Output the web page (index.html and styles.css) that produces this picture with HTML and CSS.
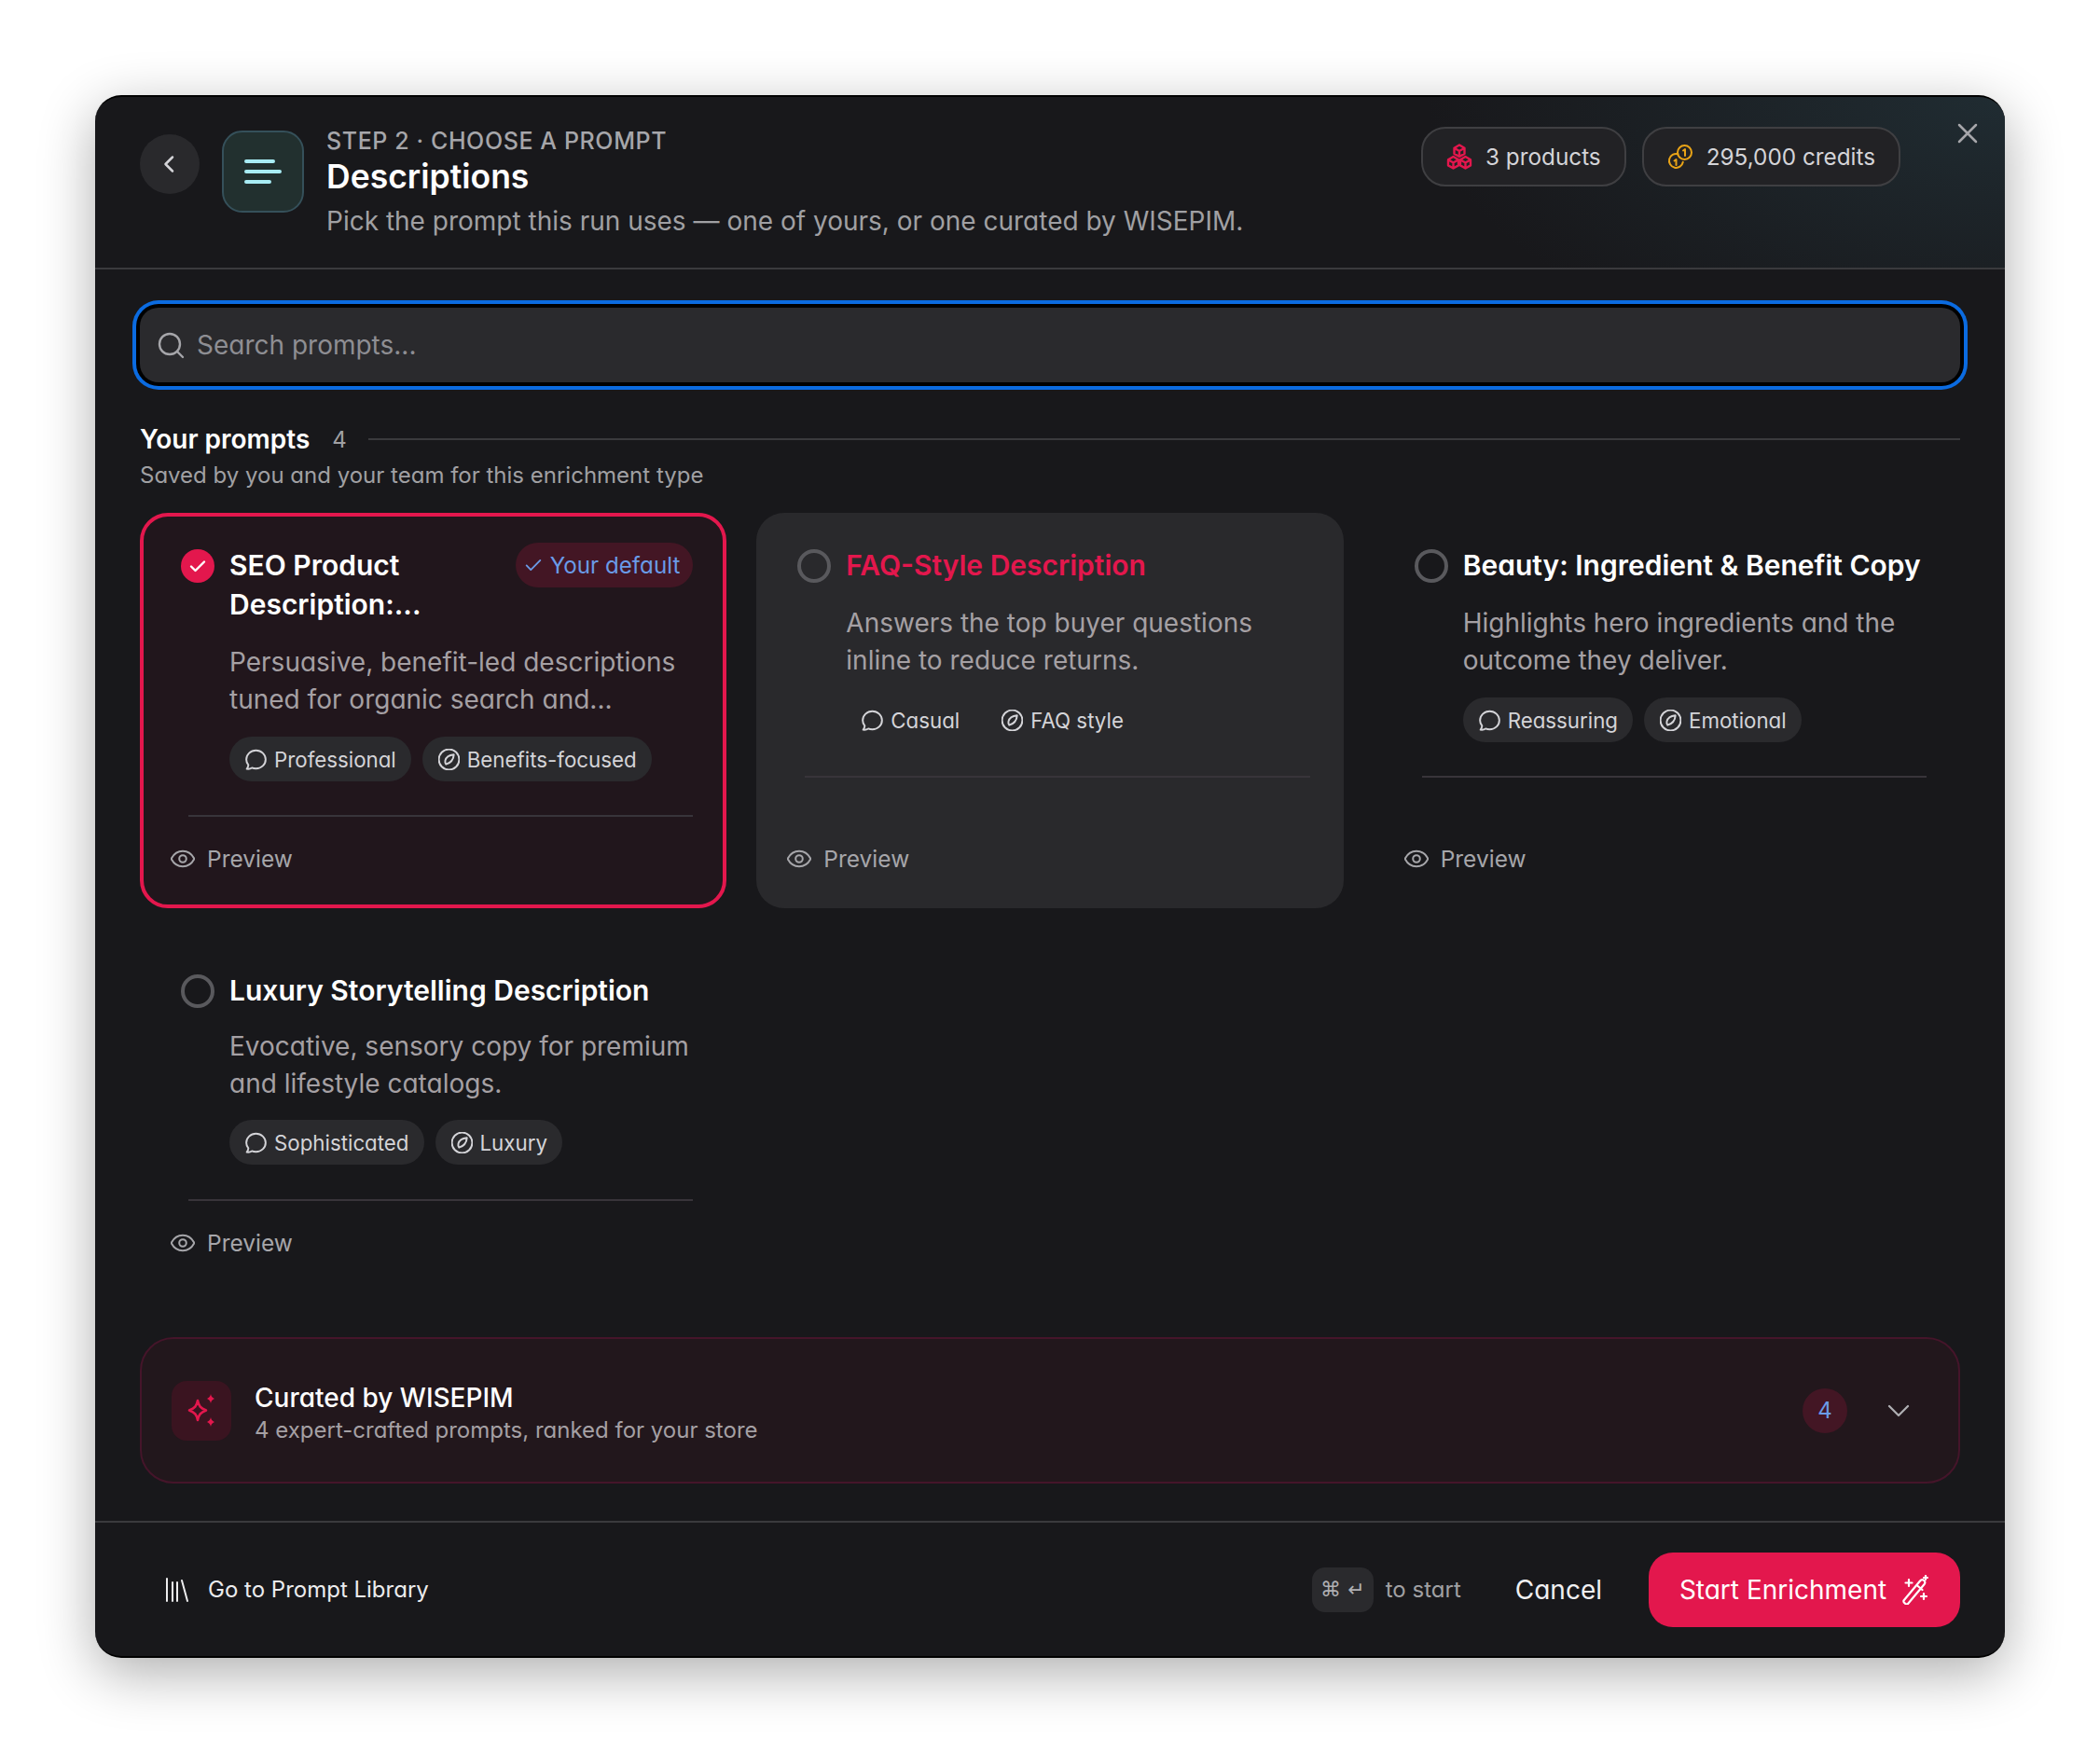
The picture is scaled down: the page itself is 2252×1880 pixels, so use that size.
FILE: index.html
```html
<!DOCTYPE html>
<html lang="en">
<head>
    <meta charset="UTF-8">
    <title>Choose a prompt</title>
    <link rel="stylesheet" href="styles.css">
</head>
<body>
    <svg class="defs" width="0" height="0">
        <symbol id="i-chat" viewBox="2 2 20 20"><path d="M3.500 20.800c1.800.3 3.400-.1 4.700-1 1.100.5 2.400.7 3.800.7 5 0 9-3.800 9-8.500S17 3.500 12 3.500 3 7.300 3 12c0 2 .7 3.800 1.900 5.200-.1 1.300-.6 2.500-1.400 3.600z"/></symbol>
        <symbol id="i-compass" viewBox="2 2 20 20"><circle cx="12" cy="12" r="9.500"/><path d="M16.500 7.500c-.3 4.500-2.500 7.500-7.300 9-.8-1-1-2.200-.7-3.500.7-2.900 4-5 8-5.500z"/></symbol>
        <symbol id="i-eye" viewBox="1 1 22 22"><path d="M1.500 12C3.800 7.500 7.500 5 12 5s8.200 2.500 10.500 7c-2.300 4.500-6 7-10.500 7S3.800 16.500 1.500 12z"/><circle cx="12" cy="12" r="3.200"/></symbol>
    </svg>

    <div class="modal">
        <div class="header">
            <button class="back-btn">
                <svg width="24" height="24" viewBox="0 0 24 24"><path d="M15 4.500 7.500 12l7.500 7.500"/></svg>
            </button>
            <div class="type-icon">
                <svg width="40" height="30" viewBox="0 0 40 30"><path d="M2 4h29M2 15h36M2 26h25"/></svg>
            </div>
            <div class="header-text">
                <div class="eyebrow">STEP 2 · CHOOSE A PROMPT</div>
                <h1>Descriptions</h1>
                <p>Pick the prompt this run uses — one of yours, or one curated by WISEPIM.</p>
            </div>
            <div class="header-chips">
                <div class="chip">
                    <svg class="chip-cubes" width="28" height="28" viewBox="0 0 28 28">
                        <path d="M14 1.500l5.500 3.200v6.200L14 14l-5.500-3.100V4.700zM14 8v6M8.500 4.700 14 8l5.500-3.300"/>
                        <path d="M7.500 14l5.500 3.200v6.200l-5.500 3.100L2 23.400v-6.200zM7.500 20.500v6M2 17.200l5.500 3.300 5.500-3.300"/>
                        <path d="M20.500 14l5.500 3.200v6.200l-5.500 3.100-5.500-3.100v-6.200zM20.500 20.500v6M15 17.200l5.500 3.300 5.500-3.300"/>
                    </svg>
                    3 products
                </div>
                <div class="chip">
                    <svg class="chip-coins" width="28" height="28" viewBox="0 0 28 28">
                        <circle cx="18.500" cy="9.500" r="7.500"/>
                        <path d="M17 7.500l2-1.500v7"/>
                        <path d="M11.500 11.200a7.500 7.500 0 1 0 5.300 8.600"/>
                        <path d="M7.500 18.500l2-1.500v6"/>
                    </svg>
                    295,000 credits
                </div>
            </div>
            <button class="close-btn">
                <svg width="26" height="26" viewBox="0 0 26 26"><path d="M4 4l18 18M22 4 4 22"/></svg>
            </button>
        </div>

        <div class="main">
            <div class="search">
                <svg width="32" height="32" viewBox="0 0 32 32"><circle cx="15" cy="15" r="11"/><path d="M23 23l6 6"/></svg>
                <span>Search prompts...</span>
            </div>

            <div class="section-head">
                <h2>Your prompts</h2>
                <span class="count">4</span>
                <div class="section-line"></div>
            </div>
            <div class="section-sub">Saved by you and your team for this enrichment type</div>

            <div class="card-grid">
                <div class="card selected">
                    <div class="card-body">
                        <div class="card-head">
                            <div class="radio checked">
                                <svg width="24" height="24" viewBox="0 0 24 24"><path d="M5 12.500l4.500 4.500L19 7.500"/></svg>
                            </div>
                            <div class="card-title">SEO Product Description:...</div>
                            <div class="default-tag">
                                <svg width="22" height="22" viewBox="0 0 24 24"><path d="M4 12.500l5 5L20 6.500"/></svg>
                                Your default
                            </div>
                        </div>
                        <div class="card-desc">Persuasive, benefit-led descriptions tuned for organic search and...</div>
                        <div class="tags">
                            <div class="tag"><svg width="23" height="23"><use href="#i-chat"/></svg>Professional</div>
                            <div class="tag"><svg width="23" height="23"><use href="#i-compass"/></svg>Benefits-focused</div>
                        </div>
                    </div>
                    <div class="card-rule"></div>
                    <div class="preview"><svg width="26" height="26"><use href="#i-eye"/></svg>Preview</div>
                </div>

                <div class="card hovered">
                    <div class="card-body">
                        <div class="card-head">
                            <div class="radio"></div>
                            <div class="card-title">FAQ-Style Description</div>
                        </div>
                        <div class="card-desc">Answers the top buyer questions inline to reduce returns.</div>
                        <div class="tags">
                            <div class="tag"><svg width="23" height="23"><use href="#i-chat"/></svg>Casual</div>
                            <div class="tag"><svg width="23" height="23"><use href="#i-compass"/></svg>FAQ style</div>
                        </div>
                    </div>
                    <div class="card-rule"></div>
                    <div class="preview"><svg width="26" height="26"><use href="#i-eye"/></svg>Preview</div>
                </div>

                <div class="card">
                    <div class="card-body">
                        <div class="card-head">
                            <div class="radio"></div>
                            <div class="card-title">Beauty: Ingredient &amp; Benefit Copy</div>
                        </div>
                        <div class="card-desc">Highlights hero ingredients and the outcome they deliver.</div>
                        <div class="tags">
                            <div class="tag"><svg width="23" height="23"><use href="#i-chat"/></svg>Reassuring</div>
                            <div class="tag"><svg width="23" height="23"><use href="#i-compass"/></svg>Emotional</div>
                        </div>
                    </div>
                    <div class="card-rule"></div>
                    <div class="preview"><svg width="26" height="26"><use href="#i-eye"/></svg>Preview</div>
                </div>

                <div class="card card-tight">
                    <div class="card-body">
                        <div class="card-head">
                            <div class="radio"></div>
                            <div class="card-title">Luxury Storytelling Description</div>
                        </div>
                        <div class="card-desc">Evocative, sensory copy for premium and lifestyle catalogs.</div>
                        <div class="tags">
                            <div class="tag"><svg width="23" height="23"><use href="#i-chat"/></svg>Sophisticated</div>
                            <div class="tag"><svg width="23" height="23"><use href="#i-compass"/></svg>Luxury</div>
                        </div>
                    </div>
                    <div class="card-rule"></div>
                    <div class="preview"><svg width="26" height="26"><use href="#i-eye"/></svg>Preview</div>
                </div>
            </div>

            <div class="curated">
                <div class="curated-icon">
                    <svg width="34" height="40" viewBox="0 0 34 40">
                        <path d="M13 9c1.200 6 3 8 9 10.500-6 2.500-7.800 4.500-9 10.500-1.200-6-3-8-9-10.500C10 17 11.800 15 13 9z"/>
                        <path class="solid" d="M27 2c.6 2.800 1.400 3.800 4 5-2.600 1.200-3.400 2.200-4 5-.6-2.800-1.400-3.800-4-5 2.600-1.200 3.400-2.200 4-5zM27 27c.6 2.800 1.400 3.800 4 5-2.600 1.200-3.400 2.200-4 5-.6-2.800-1.400-3.800-4-5 2.600-1.200 3.400-2.200 4-5z"/>
                    </svg>
                </div>
                <div class="curated-text">
                    <div class="curated-title">Curated by WISEPIM</div>
                    <div class="curated-sub">4 expert-crafted prompts, ranked for your store</div>
                </div>
                <div class="curated-badge">4</div>
                <svg class="curated-chevron" width="24" height="24" viewBox="0 0 24 24"><path d="M2 7l10 10L22 7"/></svg>
            </div>
        </div>

        <div class="footer">
            <div class="library-link">
                <svg width="26" height="26" viewBox="0 0 26 26"><path d="M2 1v24M8 5v20M13 5v20M18 3l6 22"/></svg>
                Go to Prompt Library
            </div>
            <div class="kbd">⌘ ↵</div>
            <div class="kbd-label">to start</div>
            <div class="cancel">Cancel</div>
            <button class="start-btn">
                Start Enrichment
                <svg width="30" height="32" viewBox="0 0 30 32">
                    <path d="M2.500 27.500 20 6.500c1.200-1.400 3-1.500 4.200-.5s1.300 2.800.2 4.200L7 31c-.8 1-2 .5-3-.3s-2.100-2-1.500-3.200zM16.500 11l6 5"/>
                    <path d="M8 5v7M4.500 8.500h7M24 20v6M21 23h6M26 1v4M24 3h4"/>
                </svg>
            </button>
        </div>
    </div>
</body>
</html>
```
FILE: styles.css
```css
* {
    margin: 0;
    padding: 0;
    box-sizing: border-box;
}

body {
    font-family: 'Inter', 'Noto Sans', sans-serif;
    font-feature-settings: "cv11" 1;
    background: #fff;
    color: #fff;
    min-height: 100vh;
    padding-top: 102px;
}

button {
    font-family: inherit;
    font-feature-settings: inherit;
    border: none;
    background: none;
    color: inherit;
}

svg {
    fill: none;
    stroke: currentColor;
    stroke-linecap: round;
    stroke-linejoin: round;
    flex-shrink: 0;
}

.defs {
    position: absolute;
}

.modal {
    width: 2048px;
    margin: 0 auto;
    background: #18181b;
    border-top: 2px solid #000;
    border-bottom: 2px solid #000;
    border-radius: 28px;
    box-shadow: 0 16px 60px rgba(0, 0, 0, 0.32);
    overflow: hidden;
}

/* header */
.header {
    position: relative;
    display: flex;
    align-items: flex-start;
    height: 185px;
    padding: 32px 48px 0;
    border-bottom: 2px solid #3a3a3d;
    background: radial-gradient(ellipse 620px 300px at 100% 0%, #202c32 0%, rgba(32, 44, 50, 0) 100%);
}

.back-btn {
    width: 64px;
    height: 64px;
    margin-top: 8px;
    border-radius: 50%;
    background: #29292c;
    color: #d4d4d8;
    display: flex;
    align-items: center;
    justify-content: center;
}

.back-btn svg {
    stroke-width: 2.5;
}

.type-icon {
    width: 88px;
    height: 88px;
    margin: 4px 0 0 24px;
    border-radius: 22px;
    background: #22302f;
    border: 2px solid #35505a;
    color: #a8ecf4;
    display: flex;
    align-items: center;
    justify-content: center;
}

.type-icon svg {
    stroke-width: 4;
}

.header-text {
    margin-left: 24px;
}

.eyebrow {
    font-size: 25px;
    line-height: 30px;
    font-weight: 500;
    letter-spacing: 0.6px;
    color: #a6a6aa;
}

h1 {
    font-size: 35.5px;
    line-height: 44px;
    font-weight: 600;
    margin-top: 2px;
}

.header-text p {
    font-size: 28px;
    line-height: 36px;
    color: #a0a0a3;
    margin-top: 7px;
}

.header-chips {
    margin-left: auto;
    margin-right: 64px;
    display: flex;
    gap: 17px;
}

.chip {
    height: 64px;
    padding: 0 25px;
    display: flex;
    align-items: center;
    gap: 14px;
    border: 2px solid #3f3f42;
    border-radius: 26px;
    background: #222225;
    font-size: 24.3px;
    color: #d4d4d8;
}

.chip-cubes {
    color: #e3174d;
    stroke-width: 2.4;
}

.chip-coins {
    color: #e8a317;
    stroke-width: 2;
}

.close-btn {
    position: absolute;
    top: 26px;
    right: 27px;
    color: #a6a6aa;
    display: flex;
}

.close-btn svg {
    stroke-width: 2.5;
}

/* main column */
.main {
    padding: 41px 48px 40px;
}

.search {
    height: 80px;
    padding: 0 17px;
    display: flex;
    align-items: center;
    gap: 12px;
    background: #2a2a2d;
    border-radius: 20px;
    box-shadow: 0 0 0 4px #000, 0 0 0 8px #0b6be0;
    color: #a6a6aa;
    font-size: 28px;
}

.search svg {
    stroke-width: 2.4;
}

.search span {
    color: #8e8e93;
}

.section-head {
    margin-top: 43px;
    display: flex;
    align-items: center;
    height: 36px;
}

h2 {
    font-size: 28px;
    font-weight: 600;
}

.count {
    margin-left: 24px;
    font-size: 24px;
    color: #a0a0a3;
}

.section-line {
    flex: 1;
    height: 2px;
    margin-left: 23px;
    background: #3a3a3d;
}

.section-sub {
    margin-top: 5px;
    font-size: 24px;
    line-height: 32px;
    color: #a0a0a3;
}

/* prompt cards */
.card-grid {
    margin-top: 24px;
    display: grid;
    grid-template-columns: repeat(3, 1fr);
    gap: 32px;
}

.card {
    display: flex;
    flex-direction: column;
    border: 4px solid transparent;
    border-radius: 30px;
}

.card.selected {
    border-color: #e3174d;
    background: #21161c;
}

.card.hovered {
    background: #29292c;
}

.card.hovered .card-title {
    color: #e3174d;
}

.card-body {
    padding: 31px 32px 0 40px;
}

.card-head {
    display: flex;
    align-items: flex-start;
}

.radio {
    width: 36px;
    height: 36px;
    margin-top: 4px;
    margin-right: 16px;
    border-radius: 50%;
    border: 4px solid #59595d;
    flex-shrink: 0;
}

.radio.checked {
    border: none;
    background: #e3174d;
    color: #fff;
    display: flex;
    align-items: center;
    justify-content: center;
}

.radio.checked svg {
    stroke-width: 2.4;
}

.card-title {
    font-size: 30px;
    line-height: 42px;
    font-weight: 600;
}

.default-tag {
    margin: -3px 0 0 16px;
    height: 48px;
    padding: 0 14px 0 8px;
    display: flex;
    align-items: center;
    gap: 7px;
    flex-shrink: 0;
    border-radius: 24px;
    background: #431624;
    color: #6a9be8;
    font-size: 24.2px;
}

.default-tag svg {
    stroke-width: 2;
}

.card-desc {
    margin: 21px 0 0 52px;
    font-size: 28px;
    line-height: 40px;
    color: #a5a0a4;
}

.card-tight .card-desc {
    margin-top: 19px;
}

.tags {
    margin: 20px 0 0 52px;
    display: flex;
    gap: 12px;
}

.card-tight .tags {
    margin-top: 19px;
}

.tag {
    height: 48px;
    padding: 0 16px 0 17px;
    display: flex;
    align-items: center;
    gap: 8px;
    border-radius: 24px;
    background: #2a2a2d;
    font-size: 22.3px;
    color: #d4d4d8;
}

.tag svg {
    stroke-width: 1.7;
}

.hovered .tag {
    background: none;
}

.card-rule {
    height: 2px;
    margin: 36px 32px 0 48px;
    background: #38343a;
}

.card-tight .card-rule {
    margin-top: 37px;
}

.preview {
    margin-top: auto;
    height: 94px;
    padding: 0 0 4px 29px;
    display: flex;
    align-items: center;
    gap: 13px;
    font-size: 24.5px;
    color: #a6a6aa;
}

.preview svg {
    stroke-width: 1.7;
}

/* curated block */
.curated {
    margin-top: 48px;
    height: 157px;
    padding: 0 52px 0 32px;
    display: flex;
    align-items: center;
    background: #22171c;
    border: 2px solid #45152a;
    border-radius: 36px;
}

.curated-icon {
    width: 64px;
    height: 64px;
    border-radius: 16px;
    background: #3a1420;
    color: #e3174d;
    display: flex;
    align-items: center;
    justify-content: center;
}

.curated-icon svg {
    stroke-width: 2.6;
}

.curated-icon .solid {
    fill: currentColor;
    stroke: none;
}

.curated-text {
    margin-left: 25px;
    padding-top: 6px;
}

.curated-title {
    font-size: 28px;
    line-height: 36px;
    font-weight: 500;
}

.curated-sub {
    font-size: 24px;
    line-height: 34px;
    color: #a5a0a4;
}

.curated-badge {
    margin-left: auto;
    width: 48px;
    height: 48px;
    border-radius: 50%;
    background: #431624;
    color: #6a9be8;
    font-size: 24px;
    display: flex;
    align-items: center;
    justify-content: center;
}

.curated-chevron {
    margin-left: 43px;
    color: #b0b0b3;
    stroke-width: 2.2;
}

/* footer */
.footer {
    height: 145px;
    padding: 0 48px 0 75px;
    display: flex;
    align-items: center;
    border-top: 2px solid #3a3a3d;
}

.library-link {
    display: flex;
    align-items: center;
    gap: 20px;
    font-size: 24px;
    color: #ececee;
}

.library-link svg {
    stroke-width: 2;
}

.kbd {
    margin-left: auto;
    width: 66px;
    height: 48px;
    border-radius: 14px;
    background: #2a2a2d;
    color: #b0b0b3;
    font-size: 22px;
    font-family: 'DejaVu Sans', sans-serif;
    display: flex;
    align-items: center;
    justify-content: center;
}

.kbd-label {
    margin-left: 13px;
    font-size: 24px;
    color: #a0a0a3;
}

.cancel {
    margin-left: 58px;
    font-size: 28px;
    color: #f0f0f2;
}

.start-btn {
    margin-left: 50px;
    width: 334px;
    height: 80px;
    border-radius: 26px;
    background: #e3174d;
    color: #fff;
    font-size: 28px;
    display: flex;
    align-items: center;
    justify-content: center;
    gap: 16px;
}

.start-btn svg {
    stroke-width: 2.2;
}
```
